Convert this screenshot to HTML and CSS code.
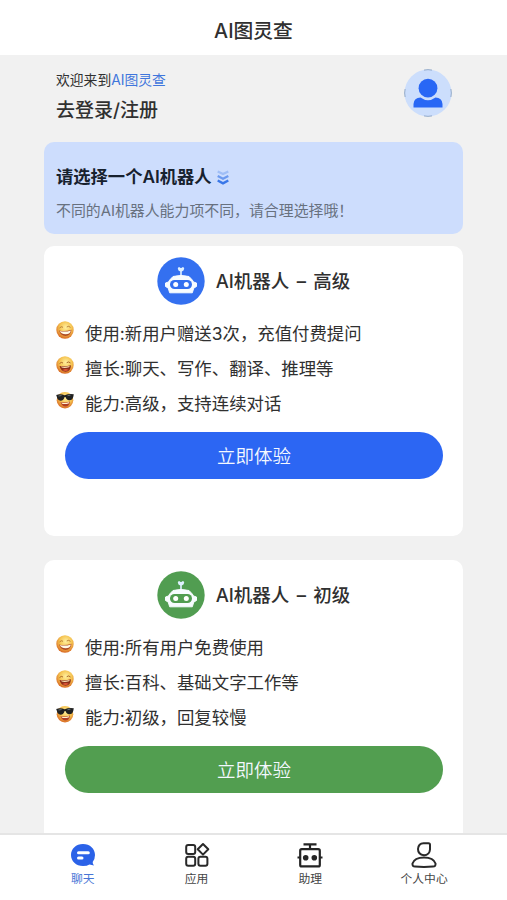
FILE: index.html
```html
<!DOCTYPE html>
<html lang="zh-CN">
<head>
<meta charset="utf-8">
<title>AI图灵查</title>
<link rel="stylesheet" href="styles.css">
</head>
<body>
<svg class="defs" aria-hidden="true">
  <defs>
    <radialGradient id="skin" cx=".55" cy=".35" r=".65">
      <stop offset="0" stop-color="#fff0a0"/><stop offset=".55" stop-color="#f5c350"/><stop offset="1" stop-color="#d96a24"/>
    </radialGradient>
    <symbol id="smile" viewBox="0 0 18 18">
      <circle cx="9" cy="9" r="8.7" fill="url(#skin)"/>
      <path d="M3.5 7Q5.3 4.9 7 6.3M10.7 6Q12.7 4.4 14.5 6.4" fill="none" stroke="#a8692a" stroke-width=".8"/>
      <path d="M3 9.5Q9 11 15.5 8.8Q15 14.8 9.5 15Q4.5 14.8 3 9.5Z" fill="#b04a24"/>
      <path d="M3.7 10Q9 11.4 14.9 9.4Q14 13.2 9.6 13.3Q5.5 13.2 3.7 10Z" fill="#fff9e6"/>
    </symbol>
    <symbol id="laugh" viewBox="0 0 18 18">
      <circle cx="9" cy="9" r="8.7" fill="url(#skin)"/>
      <path d="M3.5 7.6Q5.3 5.5 7 7M10.7 6.7Q12.7 5 14.5 7" fill="none" stroke="#a05c22" stroke-width=".9"/>
      <path d="M3.5 10Q9 11 15 9.3Q14.7 15.5 9.6 15.8Q4.8 15.5 3.5 10Z" fill="#8e2f18"/>
      <path d="M5 10.5Q9.2 11.3 13.8 10L13 11.3Q9 12.3 5.8 11.6Z" fill="#f7dfb4"/>
      <path d="M6.5 14Q9.5 12.4 12.7 13.7Q9.8 16.3 6.5 14Z" fill="#dd5537"/>
    </symbol>
    <symbol id="cool" viewBox="0 0 18 18">
      <circle cx="9" cy="9.2" r="8.3" fill="url(#skin)"/>
      <path d="M4.5 11Q9 12.4 14 10.5Q13.3 15.4 9.5 15.5Q5.7 15.4 4.5 11Z" fill="#b13e25"/>
      <path d="M5.3 11.5Q9 12.7 13.3 11.1L12.7 12.4Q9 13.5 6 12.7Z" fill="#fff0d0"/>
      <path d="M.2 4Q4.5 2.6 8.7 4.2Q13 2.3 17.8 3.3L17.3 5.8Q16.5 9.4 13.2 9.3Q10.3 9 9.5 6L8.6 6Q7.8 9.7 4.5 9.7Q1.5 9.4.9 6Z" fill="#202122"/>
      <path d="M2.5 5L5.5 4.5M11.5 4.7L14.5 4.2" stroke="#728184" stroke-width=".8"/>
    </symbol>
    <symbol id="robot" viewBox="0 0 48 48">
      <circle cx="24" cy="24" r="23.7" fill="currentColor"/>
      <path d="M20.8 11.5Q20.8 10 22.3 10Q23 11 24 11Q25 11 25.7 10Q27.2 10 27.2 11.5Q27 14 24.8 14.4V19H23.2V14.4Q21 14 20.8 11.5Z" fill="#dff1ff"/>
      <path d="M16 19.5Q24 17.4 32 19.5L35.3 23L36.5 25L39.5 26V29.5L36.8 31L35.3 35.8H12.7L11.2 31L8.5 29.5V26L11.5 25L12.7 23Z" fill="#f7fcff" stroke="#f7fcff" stroke-linejoin="round"/>
      <rect x="13" y="23" width="22" height="9" rx="4.5" fill="currentColor"/>
      <circle cx="18.7" cy="27.5" r="2.5" fill="#fff"/><circle cx="29.3" cy="27.5" r="2.5" fill="#fff"/>
    </symbol>
  </defs>
</svg>
<div class="app">
  <header class="topbar">AI图灵查</header>
  <main class="content">
    <section class="profile">
      <div>
        <p class="welcome">欢迎来到<span>AI图灵查</span></p>
        <p class="login">去登录/注册</p>
      </div>
      <svg class="avatar" viewBox="0 0 48 48">
        <circle cx="24" cy="24" r="23.5" fill="#ccdefc"/>
        <path d="M20 1.1Q24 .2 28 1.1M20 46.9Q24 47.8 28 46.9M1.1 20Q.2 24 1.1 28M46.9 20Q47.8 24 46.9 28" fill="none" stroke="#829bbc" stroke-width=".8"/>
        <circle cx="24" cy="19.2" r="9.4" fill="#2867f5"/>
        <path d="M9.5 38.5V35Q10 28.5 16.5 28.5Q24 34 31.5 28.5Q38 28.5 38.5 35V38.5Z" fill="#2867f5"/>
      </svg>
    </section>
    <section class="banner">
      <h2>请选择一个AI机器人<svg class="down" viewBox="0 0 12 15" fill="none" stroke="#3977e8" stroke-width="2.4"><path d="M.7 1.5L6 4L11.3 1.5" opacity=".3"/><path d="M.7 6L6 8.7L11.3 6" opacity=".65"/><path d="M.7 10.5L6 13.3L11.3 10.5"/></svg></h2>
      <p>不同的AI机器人能力项不同，请合理选择哦！</p>
    </section>
    <section class="card">
      <h3><svg class="bot blue"><use href="#robot"/></svg><span>AI机器人 – 高级</span></h3>
      <ul>
        <li><svg><use href="#smile"/></svg><span>使用:新用户赠送3次，充值付费提问</span></li>
        <li><svg><use href="#laugh"/></svg><span>擅长:聊天、写作、翻译、推理等</span></li>
        <li><svg><use href="#cool"/></svg><span>能力:高级，支持连续对话</span></li>
      </ul>
      <button class="try try-blue">立即体验</button>
    </section>
    <section class="card">
      <h3><svg class="bot green"><use href="#robot"/></svg><span>AI机器人 – 初级</span></h3>
      <ul>
        <li><svg><use href="#smile"/></svg><span>使用:所有用户免费使用</span></li>
        <li><svg><use href="#laugh"/></svg><span>擅长:百科、基础文字工作等</span></li>
        <li><svg><use href="#cool"/></svg><span>能力:初级，回复较慢</span></li>
      </ul>
      <button class="try try-green">立即体验</button>
    </section>
  </main>
  <nav class="tabs">
    <a class="tab active"><svg viewBox="0 0 26 26"><path d="M13 2C6 2 1 6.8 1 13S6 24 13 24Q17 24 19.5 22.5L24 23.5Q22.5 21.8 22.7 20Q25 17 25 13C25 6.8 20 2 13 2Z" fill="#2b62e8"/><path d="M8.5 10.8H18.3M8.5 16H12" stroke="#fff" stroke-width="3" stroke-linecap="round"/></svg><span>聊天</span></a>
    <a class="tab"><svg viewBox="0 0 26 26" fill="none" stroke="#292929" stroke-width="2"><rect x="2.2" y="3" width="9" height="9" rx="2"/><rect x="2.2" y="14.8" width="9" height="9" rx="2"/><rect x="14.4" y="14.8" width="9" height="9" rx="2"/><path d="M19 2L24.3 7.3L19 12.6L13.7 7.3Z" stroke-linejoin="round"/></svg><span>应用</span></a>
    <a class="tab"><svg viewBox="0 0 26 26" fill="none" stroke="#242424" stroke-width="2.2"><path d="M6.5 2.3H19.5M13 2.3V7M.5 15.5H4M22 15.5H25.5"/><rect x="3.2" y="7.2" width="19.6" height="17.2" rx="1.5"/><circle cx="8.7" cy="15.7" r="2.8" fill="#242424" stroke="none"/><circle cx="17.3" cy="15.7" r="2.8" fill="#242424" stroke="none"/></svg><span>助理</span></a>
    <a class="tab"><svg viewBox="0 0 26 26" fill="none" stroke="#292929" stroke-width="2"><path d="M12.5 1.2H17.5Q19 1.2 19 2.8V7.5Q18.5 13.2 13 13.2Q7 12.5 7 7Q7.5 1.2 12.5 1.2Z" stroke-linejoin="round"/><path d="M4 24.6Q1.2 24.6 1.5 21.5Q3.5 15.4 13 15.4Q22.5 15.4 24.5 21.5Q24.8 24.6 22 24.6Q13 25.4 4 24.6Z"/></svg><span>个人中心</span></a>
  </nav>
</div>
</body>
</html>
```
FILE: styles.css
```css
* { box-sizing: border-box; }
body {
  margin: 0;
  background: #f1f1f1;
  color: #303030;
  font-family: Inter, "Noto Sans CJK SC", sans-serif;
}
p, h2, h3, ul { margin: 0; padding: 0; }
.defs { position: absolute; width: 0; height: 0; }
.app { height: 900px; display: flex; flex-direction: column; overflow: hidden; }
.topbar {
  flex: none;
  height: 55px;
  padding-top: 6px;
  background: #fff;
  text-align: center;
  font-size: 19.8px;
  font-weight: 500;
  line-height: 50px;
}
.content { flex: 1; min-height: 0; overflow: hidden; padding: 0 44px; }
.profile {
  height: 87px;
  padding: 14px 11px 0 12px;
  display: flex;
  justify-content: space-between;
}
.welcome { font-size: 13.8px; line-height: 20px; padding-top: 1px; }
.welcome span { color: #3f76dc; }
.login { margin-top: 7px; font-size: 19px; font-weight: 500; line-height: 28px; }
.avatar { width: 48px; height: 48px; }
.banner {
  height: 92px;
  width: 419px;
  padding: 21px 12px 0;
  border-radius: 10px;
  background: #cdddfd;
}
.banner h2 {
  display: flex;
  align-items: center;
  font-size: 17.3px;
  font-weight: 600;
  line-height: 28px;
  color: #17212e;
}
.down { width: 12px; height: 15px; margin: 1px 0 0 5px; }
.banner p { margin-top: 8px; font-size: 14.9px; line-height: 24px; color: #68717f; white-space: nowrap; }
.card {
  width: 419px;
  height: 290px;
  margin-top: 12px;
  padding: 11px 21px 0;
  border-radius: 10px;
  background: #fff;
}
.card + .card { margin-top: 24px; }
.card h3 {
  display: flex;
  align-items: center;
  justify-content: center;
  height: 48px;
  font-size: 18.5px;
  font-weight: 500;
  word-spacing: 2.4px;
  white-space: pre;
}
.card h3 span { padding-bottom: 2px; }
.bot { width: 48px; height: 48px; margin-right: 11px; }
.blue { color: #3470f0; }
.green { color: #519d51; }
.card ul { list-style: none; margin: 11px 0 11px -9px; }
.card li { display: flex; height: 35px; font-size: 17.4px; line-height: 35px; white-space: nowrap; }
.card li svg { width: 18px; height: 18px; margin: 5px 11px 0 0; }
.try {
  display: block;
  width: 378px;
  height: 47px;
  padding: 0;
  border: 0;
  border-radius: 24px;
  color: #f4f8ff;
  font: 350 18.5px/47px "Noto Sans CJK SC", sans-serif;
}
.try-blue { background: #2c66f3; }
.try-green { background: #529e50; }
.tabs {
  flex: none;
  height: 67px;
  padding: 0 26px;
  border-top: 2px solid #e5e5e5;
  background: #fff;
  display: flex;
}
.tab {
  flex: 1;
  display: flex;
  flex-direction: column;
  align-items: center;
  padding-top: 7px;
  font-size: 11.8px;
  line-height: 18px;
  color: #444;
}
.tab svg { width: 26px; height: 26px; margin-bottom: 2px; }
.active { color: #4775d6; }
```
